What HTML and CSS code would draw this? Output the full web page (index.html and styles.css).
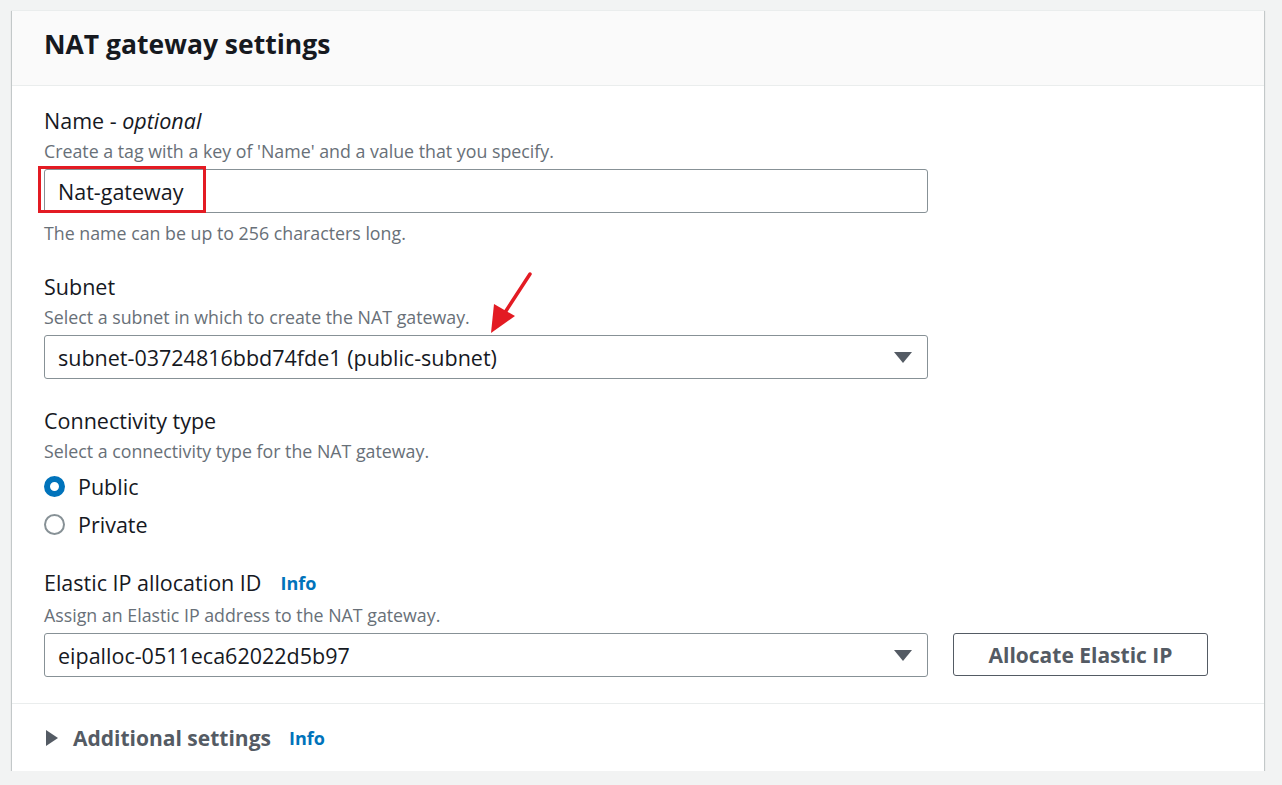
FILE: index.html
```html
<!DOCTYPE html>
<html>
<head>
<meta charset="utf-8">
<link rel="stylesheet" href="styles.css">
</head>
<body>
<div class="card">
  <div class="card-header"><h2 class="title">NAT gateway settings</h2></div>
  <div class="card-body">
    <div class="field">
      <div class="label"><span>Name - <i>optional</i></span></div>
      <div class="desc">Create a tag with a key of 'Name' and a value that you specify.</div>
      <div class="control">
        <div class="input"><span class="value">Nat-gateway</span><span class="highlight"></span></div>
      </div>
      <div class="constraint">The name can be up to 256 characters long.</div>
    </div>
    <div class="field">
      <div class="label">Subnet</div>
      <div class="desc">Select a subnet in which to create the NAT gateway.</div>
      <div class="control">
        <div class="input select"><span class="value">subnet-03724816bbd74fde1 (public-subnet)</span><span class="caret-down"></span></div>
        <svg class="arrow" width="50" height="70" viewBox="0 0 50 70"><line x1="42" y1="5" x2="14" y2="48" stroke="#e31b23" stroke-width="3.5" stroke-linecap="round"/><polygon points="3,64 6,35 27,47" fill="#e31b23"/></svg>
      </div>
    </div>
    <div class="field tight">
      <div class="label">Connectivity type</div>
      <div class="desc">Select a connectivity type for the NAT gateway.</div>
      <div class="radios">
        <div class="radio-row"><span class="radio checked"></span><span>Public</span></div>
        <div class="radio-row"><span class="radio"></span><span>Private</span></div>
      </div>
    </div>
    <div class="field last">
      <div class="label"><span>Elastic IP allocation ID</span><a class="info">Info</a></div>
      <div class="desc elastic-desc">Assign an Elastic IP address to the NAT gateway.</div>
      <div class="control row">
        <div class="input select"><span class="value">eipalloc-0511eca62022d5b97</span><span class="caret-down"></span></div>
        <button class="btn">Allocate Elastic IP</button>
      </div>
    </div>
  </div>
  <div class="card-footer">
    <span class="caret-right"></span><span class="footer-title">Additional settings</span><a class="info">Info</a>
  </div>
</div>
</body>
</html>
```
FILE: styles.css
```css
* { box-sizing: border-box; }
body {
  margin: 0;
  background: #f2f3f3;
  font-family: "Open Sans", "Noto Sans", sans-serif;
  color: #16191f;
  padding: 10px 0 0 12px;
}
.card {
  width: 1252px;
  background: #fff;
  border-top: 1px solid #eaeded;
  box-shadow: 0 1px 1px 0 rgba(0,28,36,0.3), 1px 1px 1px 0 rgba(0,28,36,0.15), -1px 1px 1px 0 rgba(0,28,36,0.15);
}
.card-header {
  background: #fafafa;
  border-bottom: 1px solid #eaeded;
  height: 75px;
  padding: 0 32px;
  display: flex;
  align-items: center;
}
.title {
  margin: 0;
  font-size: 26.5px;
  font-weight: 700;
  padding-bottom: 8px;
}
.card-body {
  padding: 22px 32px 26px;
  border-bottom: 1px solid #eaeded;
}
.field { margin-bottom: 29px; }
.field.tight { margin-bottom: 27px; }
.field.last { margin-bottom: 0; }
.label {
  font-size: 21.5px;
  line-height: 26px;
  display: flex;
  align-items: center;
}
.desc, .constraint {
  font-size: 17.8px;
  line-height: 24px;
  color: #687078;
  margin-top: 5px;
}
.elastic-desc { margin-top: 7px; }
.constraint { margin-top: 8px; }
.control { margin-top: 6px; position: relative; }
.control.row { display: flex; gap: 25px; }
.input {
  width: 884px;
  height: 44px;
  border: 1px solid #879196;
  border-radius: 3px;
  padding: 0 13px;
  display: flex;
  align-items: center;
  font-size: 21.5px;
  position: relative;
}
.select { justify-content: space-between; }
.caret-down {
  width: 0; height: 0;
  border-left: 9px solid transparent;
  border-right: 9px solid transparent;
  border-top: 11px solid #545b64;
  margin-right: 2px;
}
.highlight {
  position: absolute;
  left: -7px;
  top: -4px;
  width: 168px;
  height: 47px;
  border: 3.5px solid #e31b23;
}
.arrow {
  position: absolute;
  left: 444px;
  top: -66px;
}
.radios { margin-top: 4px; }
.radio-row {
  display: flex;
  align-items: center;
  height: 38px;
  font-size: 21.5px;
}
.radio {
  width: 21px; height: 21px;
  border-radius: 50%;
  border: 2px solid #879196;
  margin-right: 13px;
}
.radio.checked {
  border: 6px solid #0073bb;
}
.info {
  color: #0073bb;
  font-weight: 700;
  font-size: 18px;
  margin-left: 19px;
}
.btn {
  width: 255px;
  height: 43px;
  background: #fff;
  border: 1px solid #545b64;
  border-radius: 3px;
  font-family: inherit;
  font-weight: 700;
  font-size: 21px;
  color: #545b64;
}
.card-footer {
  height: 67px;
  display: flex;
  align-items: center;
  padding: 0 34px;
}
.caret-right {
  width: 0; height: 0;
  border-top: 8px solid transparent;
  border-bottom: 8px solid transparent;
  border-left: 12px solid #545b64;
  margin-right: 15px;
}
.footer-title {
  font-weight: 700;
  font-size: 21px;
  color: #545b64;
}
.card-footer .info { margin-left: 18px; }
```
